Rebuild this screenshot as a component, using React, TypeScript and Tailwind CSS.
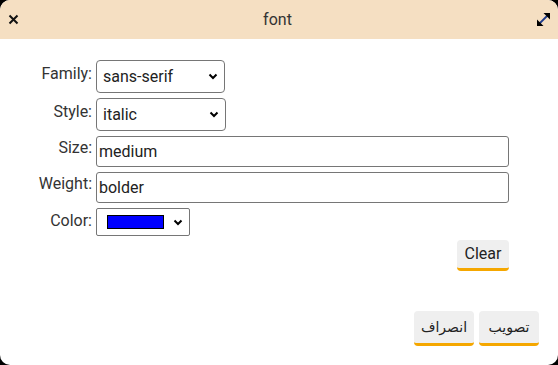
import React from "react";

function Chevron() {
  return (
    <svg width="10" height="7" viewBox="0 0 10 7" className="shrink-0">
      <path d="M1.5 1.5 L5 5 L8.5 1.5" fill="none" stroke="#000" strokeWidth="2" />
    </svg>
  );
}

function FakeSelect({ value, width }: { value: string; width: string }) {
  return (
    <div
      className={`${width} h-[33px] flex items-center justify-between pl-[6px] pr-[6px] border border-[#767676] rounded-[4px] bg-white text-[16px] text-[#222]`}
    >
      <span>{value}</span>
      <Chevron />
    </div>
  );
}

function ActionButton({ label, className }: { label: string; className: string }) {
  return (
    <button
      className={`${className} rounded-[4px] bg-[#efefef] border-b-[3px] border-[#f5a700] text-[#222] leading-none`}
    >
      {label}
    </button>
  );
}

export default function App() {
  return (
    <div className="w-[558px] h-[365px] bg-black" style={{ fontFamily: "Roboto, 'DejaVu Sans', sans-serif" }}>
      <div className="w-full h-full bg-white rounded-[10px] overflow-hidden flex flex-col">
        {/* Header */}
        <div className="h-[39px] shrink-0 bg-[#f5dfc2] flex items-center justify-between pl-[8px] pr-[7px]">
          <svg width="11" height="11" viewBox="0 0 11 11">
            <path d="M1.5 1.5 L9.5 9.5 M9.5 1.5 L1.5 9.5" stroke="#111" strokeWidth="2" />
          </svg>
          <span className="text-[16px] text-[#333]">font</span>
          <svg width="15" height="15" viewBox="0 0 15 15">
            <path d="M3 12 L12 3" stroke="#1e3a8a" strokeWidth="1.8" />
            <path d="M7.5 1 L14 1 L14 7.5 Z" fill="#000" />
            <path d="M1 7.5 L1 14 L7.5 14 Z" fill="#000" />
          </svg>
        </div>

        {/* Form */}
        <div className="flex-1 flex flex-col pt-[21px] pl-[28px] pr-[49px] text-[16px] text-[#333]">
          <div className="flex gap-[4px]">
            <div className="w-[64px] text-right pt-[2px]">Family:</div>
            <FakeSelect value="sans-serif" width="w-[129px]" />
          </div>
          <div className="flex gap-[4px] mt-[5px]">
            <div className="w-[64px] text-right pt-[2px]">Style:</div>
            <FakeSelect value="italic" width="w-[130px]" />
          </div>
          <div className="flex gap-[4px] mt-[5px]">
            <div className="w-[64px] text-right">Size:</div>
            <input
              readOnly
              value="medium"
              className="flex-1 h-[31px] px-[2px] border border-[#767676] rounded-[3px] text-[16px] text-[#222] outline-none"
            />
          </div>
          <div className="flex gap-[4px] mt-[5px]">
            <div className="w-[64px] text-right">Weight:</div>
            <input
              readOnly
              value="bolder"
              className="flex-1 h-[31px] px-[2px] border border-[#767676] rounded-[3px] text-[16px] text-[#222] outline-none"
            />
          </div>
          <div className="flex gap-[4px] mt-[5px]">
            <div className="w-[64px] text-right pt-[1px]">Color:</div>
            <div className="w-[94px] h-[28px] flex items-center justify-between pl-[10px] pr-[6px] border border-[#767676] rounded-[2px] bg-white">
              <div className="w-[57px] h-[14px] bg-[#0000ff] border border-black" />
              <Chevron />
            </div>
          </div>
          <div className="flex justify-end mt-[4px]">
            <ActionButton label="Clear" className="w-[52px] h-[31px] text-[16px]" />
          </div>
        </div>

        {/* Footer */}
        <div className="flex justify-end gap-[5px] pr-[19px] pb-[19px]">
          <ActionButton label="انصراف" className="w-[60px] h-[35px] text-[14px]" />
          <ActionButton label="تصويب" className="w-[60px] h-[35px] text-[14px]" />
        </div>
      </div>
    </div>
  );
}
